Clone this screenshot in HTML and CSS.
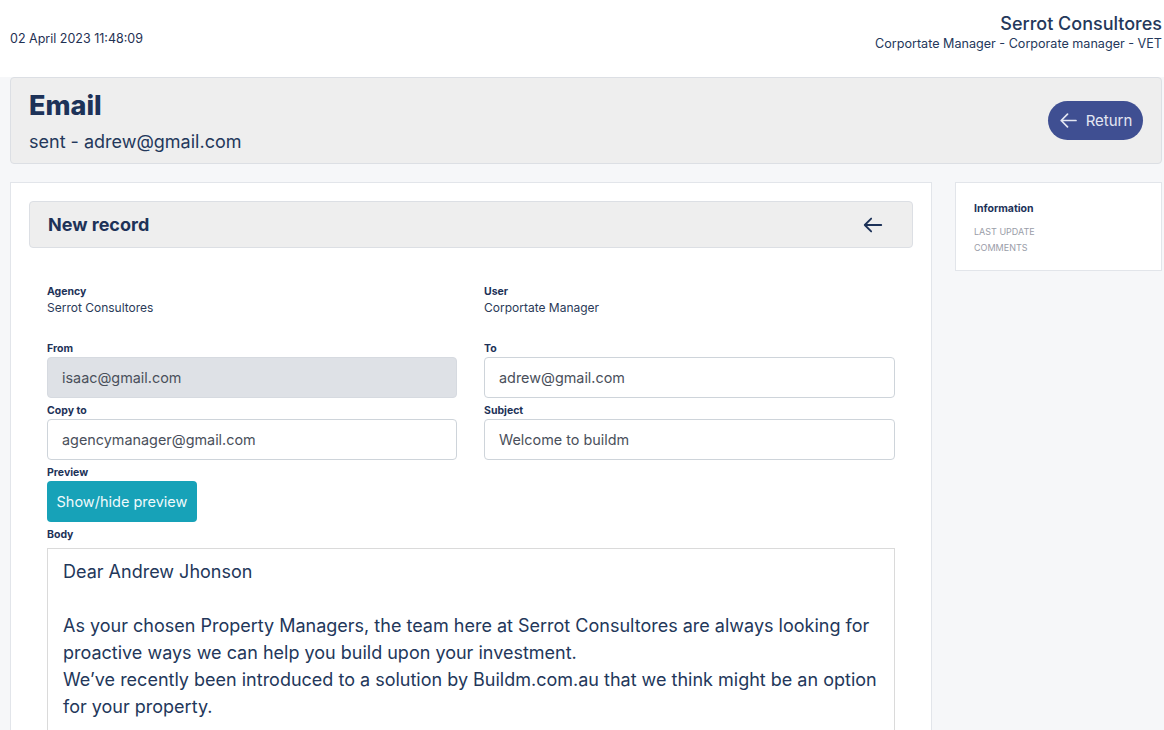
FILE: index.html
```html
<!DOCTYPE html>
<html>
<head>
<meta charset="utf-8">
<link rel="stylesheet" href="styles.css">
</head>
<body>
<header class="topbar">
  <div class="date">02 April 2023 11:48:09</div>
  <div class="account">
    <div class="account-name">Serrot Consultores</div>
    <div class="account-role">Corportate Manager - Corporate manager - VET</div>
  </div>
</header>
<main class="page">
  <section class="title-card">
    <div class="title-block">
      <h1 class="title">Email</h1>
      <div class="subtitle">sent - adrew@gmail.com</div>
    </div>
    <button class="return-btn">
      <svg width="17" height="15" viewBox="0 0 17 15" fill="none" stroke="currentColor" stroke-width="1.7" stroke-linecap="round" stroke-linejoin="round"><path d="M16 7.5H1.2M7.5 1.2L1.2 7.5l6.3 6.3"/></svg>
      <span>Return</span>
    </button>
  </section>
  <div class="columns">
    <section class="main-card">
      <div class="record-head">
        <span>New record</span>
        <svg class="back" width="22" height="22" viewBox="0 0 24 24" fill="none" stroke="currentColor" stroke-width="2" stroke-linecap="round" stroke-linejoin="round"><path d="M21 12H3M10 5l-7 7 7 7"/></svg>
      </div>
      <div class="form">
        <div class="grid info">
          <div>
            <div class="label">Agency</div>
            <div class="value">Serrot Consultores</div>
          </div>
          <div>
            <div class="label">User</div>
            <div class="value">Corportate Manager</div>
          </div>
        </div>
        <div class="grid fields">
          <div class="field">
            <div class="label">From</div>
            <div class="input disabled">isaac@gmail.com</div>
          </div>
          <div class="field">
            <div class="label">To</div>
            <div class="input">adrew@gmail.com</div>
          </div>
          <div class="field">
            <div class="label">Copy to</div>
            <div class="input">agencymanager@gmail.com</div>
          </div>
          <div class="field">
            <div class="label">Subject</div>
            <div class="input">Welcome to buildm</div>
          </div>
        </div>
        <div class="field">
          <div class="label">Preview</div>
          <button class="preview-btn">Show/hide preview</button>
        </div>
        <div class="field">
          <div class="label body-label">Body</div>
          <div class="body-box">
            <p>Dear Andrew Jhonson</p>
            <p>&nbsp;</p>
            <p>As your chosen Property Managers, the team here at Serrot Consultores are always looking for<br>proactive ways we can help you build upon your investment.</p>
            <p>We’ve recently been introduced to a solution by Buildm.com.au that we think might be an option<br>for your property.</p>
          </div>
        </div>
      </div>
    </section>
    <aside class="side-card">
      <div class="side-title">Information</div>
      <div class="side-item">LAST UPDATE</div>
      <div class="side-item">COMMENTS</div>
    </aside>
  </div>
</main>
</body>
</html>
```
FILE: styles.css
```css
* { box-sizing: border-box; }
html, body { margin: 0; padding: 0; }
body {
  font-family: Inter, "Noto Sans", sans-serif;
  color: #1f3153;
  background: #f6f7f9;
  width: 1164px;
  height: 730px;
  overflow: hidden;
}
.topbar {
  background: #fff;
  height: 77px;
  display: flex;
  justify-content: space-between;
  align-items: center;
  padding: 0 2px 0 10px;
}
.date { font-size: 12.5px; color: #1f3153; }
.account { text-align: right; margin-top: -12px; }
.account-name { font-size: 18px; line-height: 22px; font-weight: 500; color: #24385b; }
.account-role { font-size: 12.6px; line-height: 18px; color: #24385b; }
.page { padding: 0 2px 0 10px; }
.title-card {
  background: #eeeeee;
  border: 1px solid #dcdfe4;
  border-radius: 4px;
  height: 87px;
  display: flex;
  justify-content: space-between;
  align-items: center;
  padding: 0 18px 0 18px;
}
.title-block { align-self: flex-start; padding-top: 12px; }
.title { margin: 0; font-size: 27px; line-height: 32px; font-weight: 800; color: #1d3258; }
.subtitle { font-size: 18px; line-height: 24px; color: #24385b; margin-top: 8px; }
.return-btn {
  background: #3f4f92;
  color: #e4e7f2;
  border: none;
  border-radius: 20px;
  height: 39px;
  width: 95px;
  display: flex;
  align-items: center;
  justify-content: center;
  gap: 9px;
  font-family: inherit;
  font-size: 15px;
  padding: 0 0 0 1px;
}
.columns {
  display: flex;
  gap: 23px;
  margin-top: 18px;
  align-items: flex-start;
}
.main-card {
  width: 922px;
  background: #fff;
  border: 1px solid #e2e5ea;
  border-bottom: none;
  padding: 18px 18px 0 18px;
  height: 548px;
  overflow: hidden;
}
.record-head {
  background: #eeeeee;
  border: 1px solid #dcdfe4;
  border-radius: 4px;
  height: 47px;
  display: flex;
  justify-content: space-between;
  align-items: center;
  padding: 0 28px 0 18px;
  font-size: 18px;
  font-weight: 700;
  color: #1d3258;
}
.back { color: #1d3258; }
.form { padding: 37px 18px 0 18px; }
.grid {
  display: grid;
  grid-template-columns: 410px 411px;
  column-gap: 27px;
}
.info { margin-bottom: 25px; }
.label { font-size: 10.5px; font-weight: 700; line-height: 14px; color: #1d3258; }
.value { font-size: 12px; line-height: 18px; color: #2a3a58; }
.field .label { margin-bottom: 1px; }
.field .body-label { margin-bottom: 6px; }
.fields .field { margin-bottom: 6px; }
.input {
  height: 41px;
  border: 1px solid #ced4da;
  border-radius: 4px;
  background: #fff;
  display: flex;
  align-items: center;
  padding: 0 14px;
  font-size: 14.4px;
  color: #4a505b;
}
.input.disabled { background: #dee1e6; border-color: #d6dae0; }
.preview-btn {
  background: #17a2b8;
  color: #f0fafc;
  border: none;
  border-radius: 4px;
  height: 41px;
  width: 150px;
  font-family: inherit;
  font-size: 14.5px;
  padding: 0;
  margin-bottom: 6px;
  display: block;
}
.body-box {
  border: 1px solid #dadada;
  border-bottom: none;
  padding: 9px 15px 0 15px;
  font-size: 18px;
  line-height: 27px;
  color: #23375a;
  width: 848px;
  height: 182px;
}
.body-box p { margin: 0; white-space: nowrap; }
.side-card {
  width: 207px;
  background: #fff;
  border: 1px solid #e2e5ea;
  padding: 19px 18px 16px 18px;
  height: 89px;
}
.side-title { font-size: 10.5px; font-weight: 700; color: #1d3258; line-height: 14px; margin-bottom: 8px; }
.side-item { font-size: 9px; color: #9a9da8; line-height: 16px; }
```
